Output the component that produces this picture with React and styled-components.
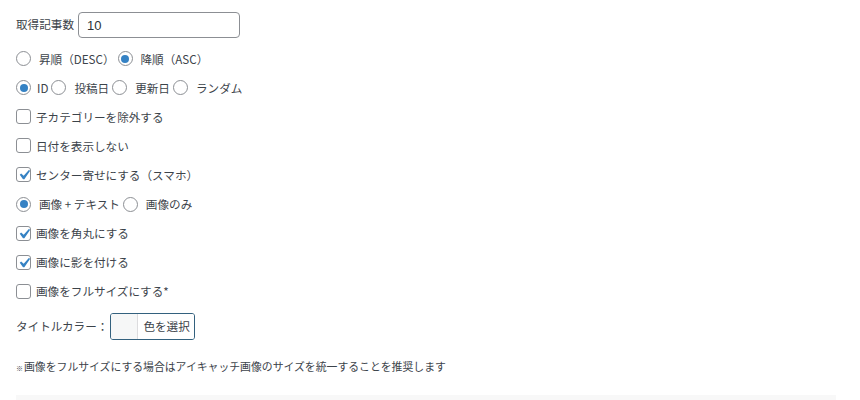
import React from "react";
import styled, { createGlobalStyle } from "styled-components";

const GlobalStyle = createGlobalStyle`
  html, body {
    margin: 0;
    padding: 0;
    background: #fff;
  }
  body {
    font-family: "Noto Sans CJK JP", "Noto Sans", sans-serif;
    color: #3c434a;
    width: 860px;
    height: 400px;
    overflow: hidden;
  }
`;

const Form = styled.div`
  display: flex;
  flex-direction: column;
  padding: 12px 16px 0 16px;
`;

const Row = styled.div`
  display: flex;
  align-items: center;
  height: ${p => p.h || 29.1}px;
  margin-top: ${p => p.mt || 0}px;
  font-size: 11.6px;
  white-space: nowrap;
`;

const Label = styled.span`
  margin-right: ${p => p.mr || 4}px;
  line-height: 1;
`;

const NumberInput = styled.div`
  box-sizing: border-box;
  width: 162px;
  height: 26px;
  border: 1px solid #8c8f94;
  border-radius: 4px;
  padding: 0 8px;
  display: flex;
  align-items: center;
  font-family: "Liberation Sans", "Noto Sans", sans-serif;
  font-size: 13px;
  color: #2c3338;
`;

const Control = styled.span`
  box-sizing: border-box;
  flex: none;
  width: 15px;
  height: 15px;
  border: 1px solid #8c8f94;
  border-radius: ${p => (p.round ? "50%" : "3px")};
  background: #fff;
  margin-right: ${p => (p.round ? 0 : 5)}px;
  display: flex;
  align-items: center;
  justify-content: center;
  position: relative;
`;

const Dot = styled.span`
  width: 8px;
  height: 8px;
  border-radius: 50%;
  background: #3582c4;
`;

const CheckSvg = styled.svg`
  position: absolute;
  left: -3px;
  top: -3px;
  width: 20px;
  height: 20px;
`;

const Radio = ({ checked }) => (
  <Control round>{checked && <Dot />}</Control>
);

const Checkbox = ({ checked }) => (
  <Control>
    {checked && (
      <CheckSvg viewBox="0 0 20 20">
        <path
          d="M14.83 4.89l1.34.94-5.81 8.38H9.02L5.78 9.67l1.34-1.25 2.57 2.4z"
          fill="#3582c4"
        />
      </CheckSvg>
    )}
  </Control>
);

const Option = styled.span`
  display: flex;
  align-items: center;
  margin-right: 3px;
`;

const OptionText = styled.span`
  margin-left: ${p => (p.tight ? 6 : 8)}px;
`;

const ColorButton = styled.div`
  display: flex;
  box-sizing: border-box;
  height: 27px;
  border: 1px solid #33617e;
  border-radius: 3px;
  overflow: hidden;
`;

const Swatch = styled.span`
  width: 26px;
  background: #f6f7f7;
  border-right: 1px solid #dcdcde;
`;

const ButtonText = styled.span`
  display: flex;
  align-items: center;
  padding: 0 4px 0 5px;
  font-size: 11.6px;
  color: #3c434a;
  background: #fff;
`;

const Note = styled.p`
  margin: 18px 0 0 0;
  font-size: 10.85px;
  line-height: 16px;
  color: #3c434a;
  white-space: nowrap;
`;

const Small = styled.span`
  font-size: 7px;
  margin-right: 1px;
`;

const Footer = styled.div`
  margin-top: 19px;
  height: 6px;
  width: 820px;
  background: #f8f8f8;
`;

const RadioGroup = ({ items, selected }) => (
  <Row>
    {items.map((item, i) => (
      <Option key={item}>
        <Radio checked={i === selected} />
        <OptionText tight={item === "ID"}>{item}</OptionText>
      </Option>
    ))}
  </Row>
);

const CheckRow = ({ checked, children }) => (
  <Row>
    <Checkbox checked={checked} />
    <span>{children}</span>
  </Row>
);

export default function App() {
  return (
    <>
      <GlobalStyle />
      <Form>
        <Row h={26} mt={0}>
          <Label>取得記事数</Label>
          <NumberInput>10</NumberInput>
        </Row>
        <Row h={6} />
        <RadioGroup items={["昇順（DESC）", "降順（ASC）"]} selected={1} />
        <RadioGroup items={["ID", "投稿日", "更新日", "ランダム"]} selected={0} />
        <CheckRow>子カテゴリーを除外する</CheckRow>
        <CheckRow>日付を表示しない</CheckRow>
        <CheckRow checked>センター寄せにする（スマホ）</CheckRow>
        <RadioGroup items={["画像 + テキスト", "画像のみ"]} selected={0} />
        <CheckRow checked>画像を角丸にする</CheckRow>
        <CheckRow checked>画像に影を付ける</CheckRow>
        <CheckRow>画像をフルサイズにする*</CheckRow>
        <Row h={27} mt={7}>
          <Label mr={2}>タイトルカラー：</Label>
          <ColorButton>
            <Swatch />
            <ButtonText>色を選択</ButtonText>
          </ColorButton>
        </Row>
        <Note>
          <Small>※</Small>画像をフルサイズにする場合はアイキャッチ画像のサイズを統一することを推奨します
        </Note>
        <Footer />
      </Form>
    </>
  );
}
